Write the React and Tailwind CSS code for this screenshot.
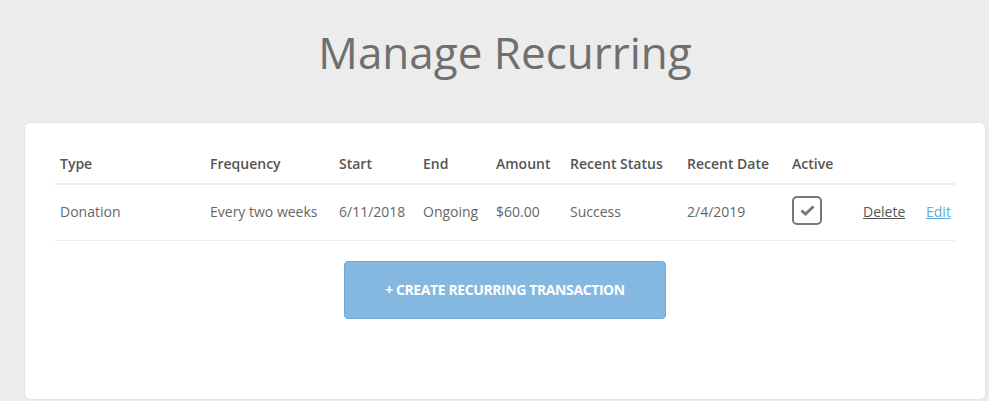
import React from 'react';

const cols = [150, 129, 84, 73, 74, 117, 105, 71, 63, 34];

export default function App() {
  return (
    <div className="min-h-[401px] bg-[#ececec] font-['Open_Sans',sans-serif]">
      <div className="ml-[25px] w-[960px]">
        <h1 className="pt-[22px] h-[123px] text-center text-[44px] leading-[60px] text-[#6f6f6f]">
          Manage Recurring
        </h1>

        <div className="bg-white rounded-[5px] shadow-[0_0_2px_rgba(0,0,0,0.12)] px-[30px] pt-[19px] h-[276px]">
          <table className="table-fixed w-[900px] border-collapse text-[14px]">
            <colgroup>
              {cols.map((w, i) => (
                <col key={i} style={{ width: w }} />
              ))}
            </colgroup>
            <thead>
              <tr className="h-[42px] border-b-2 border-[#ececec] text-left text-[#555]">
                <th className="pl-[5px] pt-[1px] font-semibold">Type</th>
                <th className="pl-[5px] pt-[1px] font-semibold">Frequency</th>
                <th className="pl-[5px] pt-[1px] font-semibold">Start</th>
                <th className="pl-[5px] pt-[1px] font-semibold">End</th>
                <th className="pl-[5px] pt-[1px] font-semibold">Amount</th>
                <th className="pl-[5px] pt-[1px] font-semibold">Recent Status</th>
                <th className="pl-[5px] pt-[1px] font-semibold">Recent Date</th>
                <th className="pl-[5px] pt-[1px] font-semibold">Active</th>
                <th></th>
                <th></th>
              </tr>
            </thead>
            <tbody>
              <tr className="h-[56px] border-b border-[#ececec] text-[#666]">
                <td className="pl-[5px] pb-[1px]">Donation</td>
                <td className="pl-[5px] pb-[1px]">Every two weeks</td>
                <td className="pl-[5px] pb-[1px]">6/11/2018</td>
                <td className="pl-[5px] pb-[1px]">Ongoing</td>
                <td className="pl-[5px] pb-[1px]">$60.00</td>
                <td className="pl-[5px] pb-[1px]">Success</td>
                <td className="pl-[5px] pb-[1px]">2/4/2019</td>
                <td className="pl-[5px] pb-[4px]">
                  <span className="flex items-center justify-center w-[30px] h-[29px] border-[2.5px] border-[#777] rounded-[5px]">
                    <svg width="15" height="11" viewBox="0 0 15 11">
                      <path d="M1.5 5.5 L5.5 9 L13.5 1.5" fill="none" stroke="#777" strokeWidth="2.8" />
                    </svg>
                  </span>
                </td>
                <td className="pl-[5px] pb-[1px]">
                  <a href="#" className="underline text-[#555]">Delete</a>
                </td>
                <td className="pl-[5px] pb-[1px]">
                  <a href="#" className="underline text-[#5aaee0]">Edit</a>
                </td>
              </tr>
            </tbody>
          </table>

          <div className="flex justify-center mt-[20px]">
            <button className="w-[322px] h-[58px] rounded-[4px] bg-[#85b8e0] border border-[#72a9d6] text-white text-[14px] tracking-[-0.4px] font-bold uppercase">
              + Create Recurring Transaction
            </button>
          </div>
        </div>
      </div>
    </div>
  );
}
